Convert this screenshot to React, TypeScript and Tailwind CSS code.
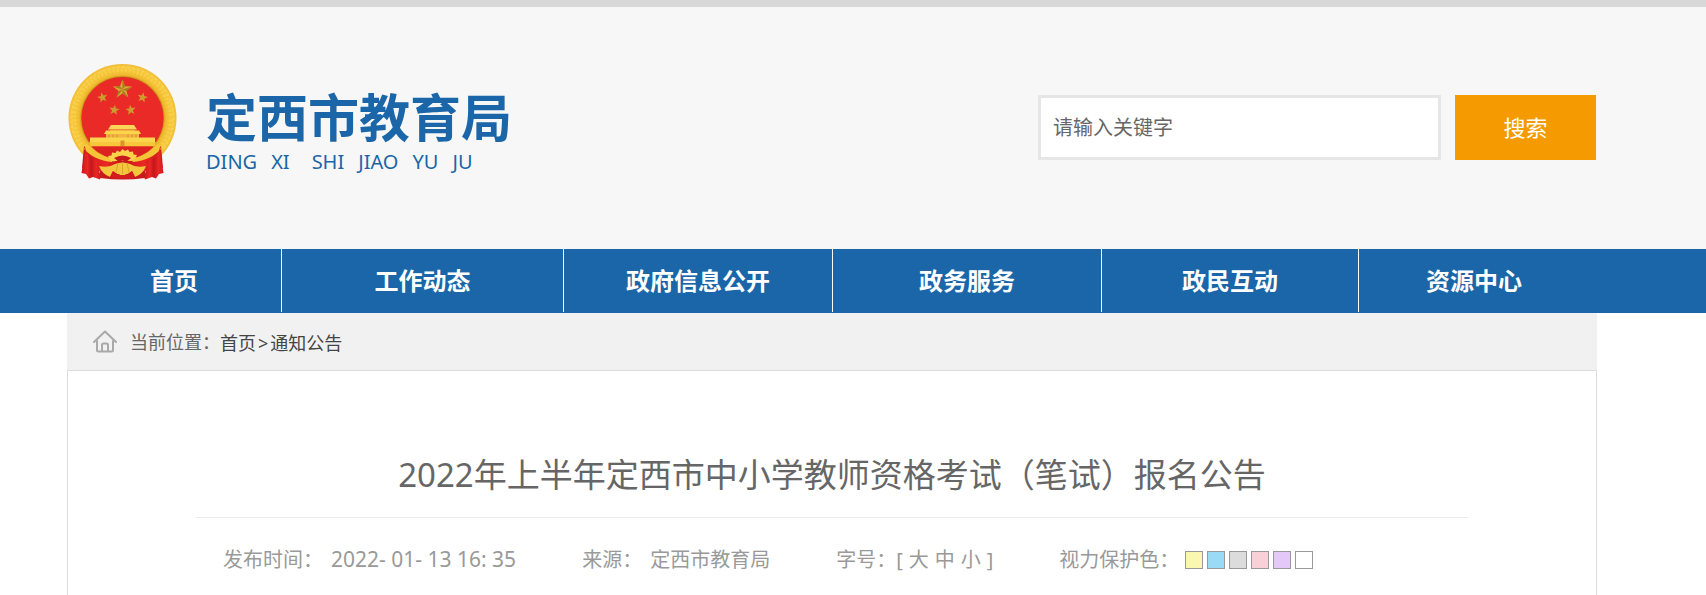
import React from "react";

const navItems = ["首页", "工作动态", "政府信息公开", "政务服务", "政民互动", "资源中心"];

const swatches = [
  { name: "黄色", color: "bg-[#faf7b0]" },
  { name: "蓝色", color: "bg-[#9bdaf5]" },
  { name: "灰色", color: "bg-[#dcdcdc]" },
  { name: "粉色", color: "bg-[#f9d0d8]" },
  { name: "紫色", color: "bg-[#e3c8f8]" },
  { name: "白色", color: "bg-white" },
];

const STAR =
  "M0,-10 L2.5,-3.2 L9.6,-3.1 L3.9,1.4 L5.9,8.1 L0,4.1 L-5.9,8.1 L-3.9,1.4 L-9.6,-3.1 L-2.5,-3.2 Z";

const smallStars = [
  { x: 34.5, y: 33.5, r: -12 },
  { x: 74.5, y: 33.5, r: 12 },
  { x: 46.3, y: 46, r: 8 },
  { x: 62.7, y: 46, r: -8 },
];

function Emblem() {
  return (
    <svg viewBox="0 0 109 116" className="h-[116px] w-[109px] shrink-0" aria-hidden="true">
      <defs>
        <radialGradient id="ring" cx="54.5" cy="54" r="54" gradientUnits="userSpaceOnUse">
          <stop offset="0.75" stopColor="#b87a12" />
          <stop offset="0.79" stopColor="#edb52a" />
          <stop offset="0.88" stopColor="#fad045" />
          <stop offset="0.95" stopColor="#f7c93e" />
          <stop offset="1" stopColor="#f0bb36" />
        </radialGradient>
        <linearGradient id="cloth" x1="0" y1="0" x2="1" y2="0">
          <stop offset="0" stopColor="#c8161a" />
          <stop offset="0.3" stopColor="#ea2724" />
          <stop offset="0.5" stopColor="#c4161b" />
          <stop offset="0.75" stopColor="#ea2724" />
          <stop offset="1" stopColor="#cc191c" />
        </linearGradient>
      </defs>
      <path d="M32 95 H77 V114 Q54.5 117 32 114 Z" fill="#c9191c" />
      <circle cx="54.5" cy="54" r="54" fill="url(#ring)" />
      <circle cx="54.5" cy="54" r="47.5" fill="none" stroke="#e2a726" strokeWidth="5" strokeDasharray="1.5 2.5" opacity="0.25" />
      <circle cx="54.5" cy="54" r="51" fill="none" stroke="#fde27a" strokeWidth="2" strokeDasharray="2 3" opacity="0.4" />
      <circle cx="54.5" cy="54" r="41" fill="#e92a26" />
      <path d={STAR} transform="translate(54.5 25.5)" fill="#dba832" />
      <path d="M0,-10 L2.5,-3.2 L0,0 Z M9.6,-3.1 L3.9,1.4 L0,0 Z M5.9,8.1 L0,4.1 L0,0 Z M-5.9,8.1 L-3.9,1.4 L0,0 Z M-9.6,-3.1 L-2.5,-3.2 L0,0 Z" transform="translate(54.5 25.5)" fill="#a57a1e" />
      {smallStars.map((s) => (
        <path key={`${s.x}-${s.y}`} d={STAR} transform={`translate(${s.x} ${s.y}) rotate(${s.r}) scale(0.54)`} fill="#cf9a30" />
      ))}
      <path d="M43 61 H66 L69 65.5 H40 Z" fill="#f9d657" />
      <path d="M42 65.5 H67 V68 H42 Z" fill="#e9973a" />
      <path d="M38 66.5 H71 L73 70 H36 Z" fill="#fbd44a" />
      <path d="M38 70 H71 V75 H38 Z" fill="#f2b544" />
      <path d="M41 70.5 V74 M45 70.5 V74 M49 70.5 V74 M60 70.5 V74 M64 70.5 V74 M68 70.5 V74" stroke="#d88a28" strokeWidth="1" />
      <path d="M22 73.5 H87 V81 H22 Z" fill="#fbd54c" />
      <path d="M21 78 H88 L86 82.5 H23 Z" fill="#f8c63a" />
      <path d="M52.5 76.5 h4 V82 h-4 Z" fill="#d9952c" />
      <path d="M23 82.5 H86 Q74 95 54.5 96 Q35 95 23 82.5 Z" fill="#dd2322" />
      <path d="M16 82 C21 88 31 93 45 97 L64 97 C78 93 88 88 93 82 L95 104 C80 112 66 104 54.5 100 C43 104 29 112 14 104 Z" fill="url(#cloth)" />
      <path d="M19 80 C26 88 36 93 46 95 L44 98 C32 97 22 92 16 85 Z M90 80 C83 88 73 93 63 95 L65 98 C77 97 87 92 93 85 Z" fill="#f5c437" />
      <path d="M54.5 85 l2.5 2 3-1.5 1.5 2.5 3.5-.5 .5 3 3.5 .5 -2 4 -4 1.5 Q54.5 93 46 97.500 l-4-1.500 -2-4 3.500-.5 .5-3 3.500 .5 1.500-2.500 3 1.500 Z" fill="#fbd34a" />
      <path d="M46 94 Q54.500 89 63 94 L58 98 Q54.500 95 51 98 Z" fill="#c41a1b" />
      <path d="M31 102 Q41 104 47 100 Q54.500 97 62 100 Q68 104 78 102 Q75 110 67 113 L64 107 Q62 111 58 110 L54.500 113 L51 110 Q47 111 45 107 L42 113 Q34 110 31 102 Z" fill="#f4c63e" />
      <path d="M54.5 98 V110 M50 99 L48 108 M59 99 L61 108" stroke="#dfa32a" strokeWidth="1" />
      <path d="M17 83 Q18 93 30 97 Q30 106 33 112 L32 115.500 L25 113 L21 114.500 L18 110 L13.500 109 Q16 96 17 83 Z" fill="url(#cloth)" />
      <path d="M92 83 Q91 93 79 97 Q79 106 76 112 L77 115.500 L84 113 L88 114.500 L91 110 L95.500 109 Q93 96 92 83 Z" fill="url(#cloth)" />
      <path d="M42 113 L45 107 L51 111 H58 L64 107 L67 113 Q54.500 117 42 113 Z" fill="#d31c1e" />
    </svg>
  );
}

function HomeIcon() {
  return (
    <svg viewBox="0 0 24 23" className="h-[23px] w-6 shrink-0" fill="none" stroke="#a9a9a9" strokeWidth="2" strokeLinejoin="round" strokeLinecap="round" aria-hidden="true">
      <path d="M1 12 L12 1.500 L23 12" />
      <path d="M4 11 V20 Q4 21.500 5.500 21.500 H18.500 Q20 21.500 20 20 V11" />
      <path d="M9 21 V15 Q9 13.500 10.500 13.500 H13.500 Q15 13.500 15 15 V21" />
    </svg>
  );
}

export default function App() {
  return (
    <div lang="zh-CN" className="font-['Noto_Sans','Noto_Sans_CJK_SC',sans-serif] text-[#666]">
      <header className="border-t-[7px] border-[#d8d8d8] bg-[#f7f7f7] pr-[110px] pl-[68px]">
        <div className="flex h-[242px] items-start justify-between">
          <div className="flex pt-[57px]">
            <Emblem />
            <div className="ml-[29px] pt-6 text-[#1a66a8]">
              <h1 className="text-[51px] leading-[58px] font-bold">定西市教育局</h1>
              <p className="flex gap-[14px] text-xl leading-8">
                <span>DING</span>
                <span>XI</span>
                <span className="ml-2">SHI</span>
                <span>JIAO</span>
                <span>YU</span>
                <span>JU</span>
              </p>
            </div>
          </div>
          <form className="flex gap-[14px] pt-[88px]" onSubmit={(e) => e.preventDefault()}>
            <input
              type="text"
              aria-label="请输入关键字"
              placeholder="请输入关键字"
              className="h-[65px] w-[403px] border-[3px] border-[#e6e6e6] bg-white px-3 text-xl outline-none placeholder:text-[#666]"
            />
            <button type="submit" className="h-[65px] w-[141px] bg-[#f59a00] text-[22px] text-white">
              搜索
            </button>
          </form>
        </div>
      </header>

      <nav className="bg-[#1a66a8] pr-[109px] pb-px pl-[67px]">
        <ul className="grid grid-cols-[215fr_282fr_269fr_269fr_257fr_238fr]">
          {navItems.map((item) => (
            <li key={item} className="border-r border-white last:border-r-0 last:pr-2">
              <a href="#" className="block text-center text-2xl leading-[63px] font-bold text-white">
                {item}
              </a>
            </li>
          ))}
        </ul>
      </nav>

      <div className="pr-[109px] pl-[67px]">
        <div className="flex h-[57px] items-center bg-[#f1f1f1] pl-[26px] text-lg">
          <HomeIcon />
          <span className="ml-[13px]">当前位置：</span>
          <span className="flex items-center gap-[2px] pt-[2px] text-[#444]">
            <a href="#">首页</a>
            <span>&gt;</span>
            <a href="#">通知公告</a>
          </span>
        </div>
        <main className="min-h-[225px] border border-b-0 border-[#dcdcdc] px-[128px]">
          <h2 className="border-b border-[#ebebeb] pt-20 pb-[18px] text-center text-[33px] leading-[48px]">
            2022年上半年定西市中小学教师资格考试（笔试）报名公告
          </h2>
          <div className="flex h-[84px] items-center gap-[66px] pl-[27px] text-xl whitespace-nowrap text-[#999]">
            <span className="flex items-center gap-2">
              <span>发布时间：</span>
              <time className="text-[21px]">2022- 01- 13 16: 35</time>
            </span>
            <span className="flex gap-2">
              <span>来源：</span>
              <span>定西市教育局</span>
            </span>
            <span className="flex gap-[6px]">
              <span>字号：[</span>
              <button type="button">大</button>
              <button type="button">中</button>
              <button type="button">小</button>
              <span>]</span>
            </span>
            <span className="flex items-center gap-[6px]">
              <span>视力保护色：</span>
              <span className="flex gap-1">
                {swatches.map((s) => (
                  <button key={s.name} type="button" aria-label={s.name} className={`h-[18px] w-[18px] border border-[#999] ${s.color}`} />
                ))}
              </span>
            </span>
          </div>
        </main>
      </div>
    </div>
  );
}
